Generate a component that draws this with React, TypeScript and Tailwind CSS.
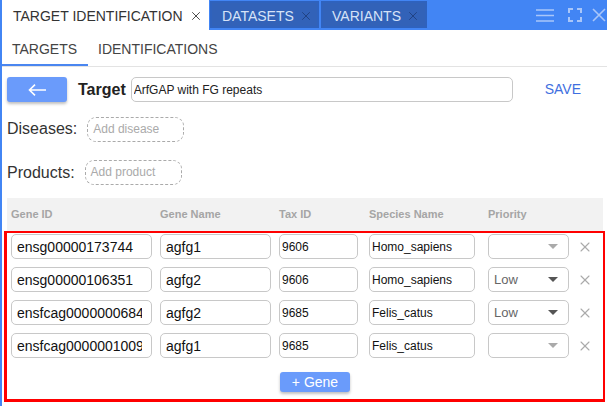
import { X } from "lucide-react";

const genes = [
  { id: "ensg00000173744", name: "agfg1", tax: "9606", species: "Homo_sapiens", priority: "" },
  { id: "ensg00000106351", name: "agfg2", tax: "9606", species: "Homo_sapiens", priority: "Low" },
  { id: "ensfcag00000006842", name: "agfg2", tax: "9685", species: "Felis_catus", priority: "Low" },
  { id: "ensfcag00000010098", name: "agfg1", tax: "9685", species: "Felis_catus", priority: "" },
];

const cellInput = "h-[25px] rounded-[5px] border border-[#c8c8c8] bg-white outline-none text-[#111]";

function InnerTab({ label, className }: { label: string; className: string }) {
  return (
    <div className={`flex h-[27px] items-center gap-[5px] border-2 border-[#2f62bd] bg-[#3262b8] pt-[3px] ${className}`}>
      <span className="text-[14px] text-[#d6e2f7]">{label}</span>
      <X size={14} strokeWidth={1.5} className="text-[#1f3f7d]" />
    </div>
  );
}

export default function App() {
  return (
    <div className="flex h-[406px] w-[607px] flex-col overflow-hidden border-l-2 border-[#4285f4] bg-white font-['Liberation_Sans',Arial,sans-serif]">
      <div className="flex h-[30px] shrink-0 items-start bg-[#4285f4]">
        <div className="flex h-[30px] w-[207px] items-center gap-[6px] bg-white pt-[2px] pl-[11px]">
          <span className="text-[14px] text-[#333]">TARGET IDENTIFICATION</span>
          <X size={14} strokeWidth={1.5} className="text-[#333]" />
        </div>
        <div className="mt-px ml-px flex gap-[2px]">
          <InnerTab label="DATASETS" className="w-[109px] pl-[10px]" />
          <InnerTab label="VARIANTS" className="w-[106px] pl-[9px]" />
        </div>
        <div className="ml-auto flex h-[30px] items-center pr-[1px] text-[#a9c6f9]">
          <svg width="18" height="13" viewBox="0 0 18 13" className="mr-[14px]">
            <path d="M0 1h18M0 6.5h18M0 12h18" stroke="currentColor" strokeWidth="1.6" />
          </svg>
          <svg width="14" height="14" viewBox="0 0 14 14" className="mr-[10px]">
            <path d="M1 5V1h4M9 1h4v4M13 9v4H9M5 13H1V9" fill="none" stroke="currentColor" strokeWidth="2" />
          </svg>
          <svg width="14" height="14" viewBox="0 0 14 14">
            <path d="M1 1l12 12M13 1L1 13" stroke="currentColor" strokeWidth="1.6" />
          </svg>
        </div>
      </div>

      <div className="flex h-[37px] shrink-0 border-b border-[#e3e3e3] text-[14px] text-[#444]">
        <div className="flex w-[86px] items-center border-b-2 border-[#4a86f0] pt-[5px] pl-[10px]">TARGETS</div>
        <div className="flex items-center pt-[3px] pl-[10px]">IDENTIFICATIONS</div>
      </div>

      <div className="mt-[10px] flex h-[25px] shrink-0 items-center pl-[5px]">
        <button className="flex h-[25px] w-[60px] items-center justify-center rounded-[3px] bg-[#6a9bfb] text-white shadow-[0_2px_3px_rgba(0,0,0,0.25)]">
          <svg width="18" height="12" viewBox="0 0 18 12">
            <path d="M18 6H1.5M7 .7L1.5 6 7 11.3" fill="none" stroke="currentColor" strokeWidth="1.6" />
          </svg>
        </button>
        <span className="ml-[11px] text-[16px] font-bold text-[#222]">Target</span>
        <input
          readOnly
          value="ArfGAP with FG repeats"
          className="ml-[5px] h-[25px] w-[382px] rounded-[5px] border border-[#c8c8c8] pl-[2px] text-[12px] text-[#222] outline-none"
        />
        <span className="ml-[32px] text-[14px] text-[#3f6fe0]">SAVE</span>
      </div>

      <div className="mt-[15px] flex h-[25px] shrink-0 items-center pl-[5px]">
        <span className="pb-[2px] text-[16px] text-[#333]">Diseases:</span>
        <div className="ml-[10px] flex h-[25px] w-[97px] items-center rounded-[9px] border border-dashed border-[#aaa] pb-[2px] pl-[5px] text-[12px] text-[#aaa]">
          Add disease
        </div>
      </div>

      <div className="mt-[18px] flex h-[25px] shrink-0 items-center pl-[5px]">
        <span className="text-[16px] text-[#333]">Products:</span>
        <div className="ml-[10px] flex h-[25px] w-[97px] items-center rounded-[9px] border border-dashed border-[#aaa] pb-[2px] pl-[5px] text-[12px] text-[#aaa]">
          Add product
        </div>
      </div>

      <div className="mt-[13px] ml-[5px] flex h-[33px] w-[596px] shrink-0 items-center bg-[#f2f2f2] text-[11px] font-bold text-[#a5a5a5]">
        <span className="ml-[4px] w-[149px]">Gene ID</span>
        <span className="w-[119px]">Gene Name</span>
        <span className="w-[90px]">Tax ID</span>
        <span className="w-[119px]">Species Name</span>
        <span>Priority</span>
      </div>

      <div className="ml-[2px] flex h-[171px] w-[601px] shrink-0 flex-col border-2 border-b-[3px] border-l-[3px] border-[#f00] pt-[1px] pl-[4px]">
        <div className="flex flex-col gap-[8px]">
          {genes.map((g) => (
            <div key={g.id} className="flex items-center">
              <input readOnly value={g.id} className={`${cellInput} w-[141px] pr-[9px] pl-[5px] text-[14px]`} />
              <input readOnly value={g.name} className={`${cellInput} ml-[8px] w-[111px] px-[5px] text-[14px]`} />
              <input readOnly value={g.tax} className={`${cellInput} ml-[8px] w-[79px] px-[2px] text-[12px]`} />
              <input readOnly value={g.species} className={`${cellInput} ml-[11px] w-[106px] px-[2px] text-[12px]`} />
              <div className={`${cellInput} ml-[13px] flex w-[81px] items-center justify-between pr-[10px] pl-[5px] text-[13px] !text-[#666]`}>
                <span>{g.priority}</span>
                <span className={`h-0 w-0 border-x-[5px] border-t-[5px] border-x-transparent ${g.priority ? "border-t-[#555]" : "border-t-[#aaa]"}`} />
              </div>
              <X size={16} strokeWidth={1.6} className="mt-[1px] ml-[8px] text-[#aaa]" />
            </div>
          ))}
        </div>
        <button className="mt-[14px] ml-[269px] h-[20px] w-[70px] rounded-[3px] bg-[#6a9bfb] text-[14px] text-white shadow-[0_2px_3px_rgba(0,0,0,0.25)]">
          + Gene
        </button>
      </div>
    </div>
  );
}
